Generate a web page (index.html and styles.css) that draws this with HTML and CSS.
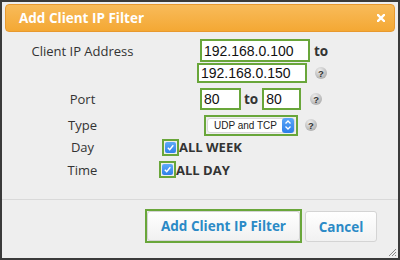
FILE: index.html
```html
<!DOCTYPE html>
<html lang="en">
<head>
    <meta charset="UTF-8">
    <title>Add Client IP Filter</title>
    <link rel="stylesheet" href="styles.css">
</head>
<body>
    <div class="dialog">
        <div class="titlebar">
            <span class="title">Add Client IP Filter</span>
            <svg class="close" width="8" height="8" viewBox="0 0 8 8">
                <path d="M1 1 L7 7 M7 1 L1 7" stroke="#fff" stroke-width="2.4" stroke-linecap="square"/>
            </svg>
        </div>

        <div class="form">
            <div class="row row-ip">
                <div class="label">Client IP Address</div>
                <div class="value">
                    <div class="line line-ip1">
                        <input class="field field-ip" type="text" value="192.168.0.100">
                        <span class="to">to</span>
                    </div>
                    <div class="line line-ip2">
                        <input class="field field-ip field-ip2" type="text" value="192.168.0.150">
                        <span class="help">?</span>
                    </div>
                </div>
            </div>

            <div class="row row-port">
                <div class="label">Port</div>
                <div class="value line-port">
                    <input class="field field-port" type="text" value="80">
                    <span class="to to-port">to</span>
                    <input class="field field-port field-port2" type="text" value="80">
                    <span class="help help-port">?</span>
                </div>
            </div>

            <div class="row row-type">
                <div class="label">Type</div>
                <div class="value line-type">
                    <div class="select-frame">
                        <div class="select">
                            <span class="select-text">UDP and TCP</span>
                            <span class="stepper">
                                <svg width="8" height="12" viewBox="0 0 8 12">
                                    <path d="M1.5 4.5 L4 2 L6.5 4.5 M1.5 7.5 L4 10 L6.5 7.5" stroke="#fff" stroke-width="1.3" fill="none"/>
                                </svg>
                            </span>
                        </div>
                    </div>
                    <span class="help help-type">?</span>
                </div>
            </div>

            <div class="row row-day">
                <div class="label">Day</div>
                <div class="value line-day">
                    <span class="check">
                        <span class="check-box">
                            <svg width="9" height="9" viewBox="0 0 9 9">
                                <path d="M1.8 4.8 L3.7 6.7 L7.3 2.2" stroke="#fff" stroke-width="1.4" fill="none"/>
                            </svg>
                        </span>
                    </span>
                    <span class="check-label">ALL WEEK</span>
                </div>
            </div>

            <div class="row row-time">
                <div class="label">Time</div>
                <div class="value line-time">
                    <span class="check">
                        <span class="check-box">
                            <svg width="9" height="9" viewBox="0 0 9 9">
                                <path d="M1.8 4.8 L3.7 6.7 L7.3 2.2" stroke="#fff" stroke-width="1.4" fill="none"/>
                            </svg>
                        </span>
                    </span>
                    <span class="check-label">ALL DAY</span>
                </div>
            </div>
        </div>

        <div class="footer">
            <div class="btn-frame">
                <button class="btn btn-primary">Add Client IP Filter</button>
            </div>
            <button class="btn btn-cancel">Cancel</button>
        </div>

        <svg class="grip" width="10" height="10" viewBox="0 0 10 10">
            <path d="M9 2 L2 9 M9 5 L5 9 M9 8 L8 9" stroke="#888" stroke-width="1"/>
        </svg>
    </div>
</body>
</html>
```

FILE: styles.css
```css
body {
    margin: 0;
    font-family: 'Open Sans', 'DejaVu Sans', sans-serif;
    color: #333;
}
.dialog {
    position: relative;
    width: 400px;
    height: 260px;
    box-sizing: border-box;
    border: 2px solid #3a3a3a;
    background: #eeeeee;
    display: flex;
    flex-direction: column;
}
.titlebar {
    margin: 2px 3px 0 3px;
    height: 28px;
    box-sizing: border-box;
    border: 1px solid #e8992e;
    border-radius: 4px;
    background: linear-gradient(#f8bb5a, #f4a834);
    display: flex;
    align-items: center;
    justify-content: space-between;
    padding: 0 9px 0 13px;
}
.title {
    color: #fff;
    font-weight: bold;
    font-size: 13.5px;
}
.form {
    padding: 7px 0 0 18px;
}
.row {
    display: flex;
}
.label {
    width: 125px;
    text-align: center;
    font-size: 13px;
    color: #333;
}
.value {
    display: flex;
}
.line {
    display: flex;
    align-items: center;
}

/* client ip */
.row-ip .value {
    flex-direction: column;
}
.row-ip .label {
    line-height: 25px;
}
.line-ip1 {
    height: 23px;
    padding-left: 55px;
}
.line-ip2 {
    height: 20px;
    margin-top: 1px;
    padding-left: 52px;
}
.field {
    box-sizing: border-box;
    border: 2px solid #69a63a;
    border-radius: 0;
    background: #fff;
    font-family: 'Liberation Sans', Arial, sans-serif;
    font-size: 14px;
    color: #111;
    padding: 0 0 0 2px;
    margin: 0;
    outline: none;
}
.field-ip {
    width: 110px;
    height: 23px;
}
.field-ip2 {
    height: 20px;
}
.to {
    font-weight: bold;
    font-size: 13.5px;
    color: #333;
    margin-left: 4px;
}
.help {
    display: inline-flex;
    align-items: center;
    justify-content: center;
    width: 12px;
    height: 12px;
    border-radius: 50%;
    background: radial-gradient(circle at 40% 30%, #eeeeee, #9c9c9c);
    font-family: 'Liberation Sans', Arial, sans-serif;
    font-size: 9.5px;
    font-weight: bold;
    color: #333;
    margin-left: 8px;
}

/* port */
.row-port {
    margin-top: 5px;
    height: 22px;
    align-items: center;
}
.line-port {
    align-items: center;
    padding-left: 55px;
}
.field-port {
    width: 41px;
    height: 22px;
}
.field-port2 {
    width: 39px;
}
.to-port {
    margin: 0 4px 0 3px;
}
.help-port {
    margin-left: 9px;
}

/* type */
.row-type {
    margin-top: 5px;
    height: 20px;
    align-items: center;
}
.line-type {
    align-items: center;
    padding-left: 59px;
}
.select-frame {
    border: 2px solid #69a63a;
    width: 94px;
    height: 21px;
    box-sizing: border-box;
    padding: 1px;
}
.select {
    height: 100%;
    box-sizing: border-box;
    background: #fff;
    border: 1px solid #d8d8d8;
    border-radius: 3px;
    display: flex;
    align-items: center;
    justify-content: space-between;
    padding-left: 6px;
}
.select-text {
    font-family: 'Liberation Sans', Arial, sans-serif;
    font-size: 10px;
    color: #222;
    white-space: nowrap;
}
.stepper {
    flex-shrink: 0;
    width: 12px;
    height: 15px;
    border-radius: 3px;
    background: linear-gradient(#5aa6f8, #2c7ee8);
    display: flex;
    align-items: center;
    justify-content: center;
}
.help-type {
    margin-left: 7px;
}

/* checkboxes */
.row-day {
    margin-top: 1px;
    height: 22px;
    align-items: center;
}
.row-time {
    height: 23px;
    align-items: center;
}
.line-day {
    align-items: center;
    padding-left: 17px;
}
.line-time {
    align-items: center;
    padding-left: 14px;
}
.check {
    width: 17px;
    height: 17px;
    box-sizing: border-box;
    border: 2px solid #69a63a;
    display: flex;
    align-items: center;
    justify-content: center;
}
.check-box {
    width: 11px;
    height: 11px;
    border-radius: 2px;
    background: linear-gradient(#5eaaf9, #2f80ea);
    display: flex;
    align-items: center;
    justify-content: center;
}
.check-label {
    font-weight: bold;
    font-size: 13px;
    color: #333;
}

/* footer */
.footer {
    margin-top: auto;
    border-top: 1px solid #d9d9d9;
    height: 59px;
    box-sizing: border-box;
    padding: 9px 21px 0 0;
    display: flex;
    justify-content: flex-end;
    align-items: flex-start;
    gap: 3px;
}
.btn-frame {
    border: 2px solid #69a63a;
    height: 34px;
    box-sizing: border-box;
    display: flex;
}
.btn {
    font-family: 'Open Sans', 'DejaVu Sans', sans-serif;
    font-weight: bold;
    font-size: 13.5px;
    color: #2b8ac6;
    background: linear-gradient(#ffffff, #f1f1f1);
    border: 1px solid #d4d4d4;
    border-radius: 3px;
    cursor: pointer;
}
.btn-primary {
    width: 153px;
    height: 30px;
}
.btn-cancel {
    width: 72px;
    height: 31px;
    margin-top: 2px;
}
.grip {
    position: absolute;
    right: 1px;
    bottom: 1px;
}
```
